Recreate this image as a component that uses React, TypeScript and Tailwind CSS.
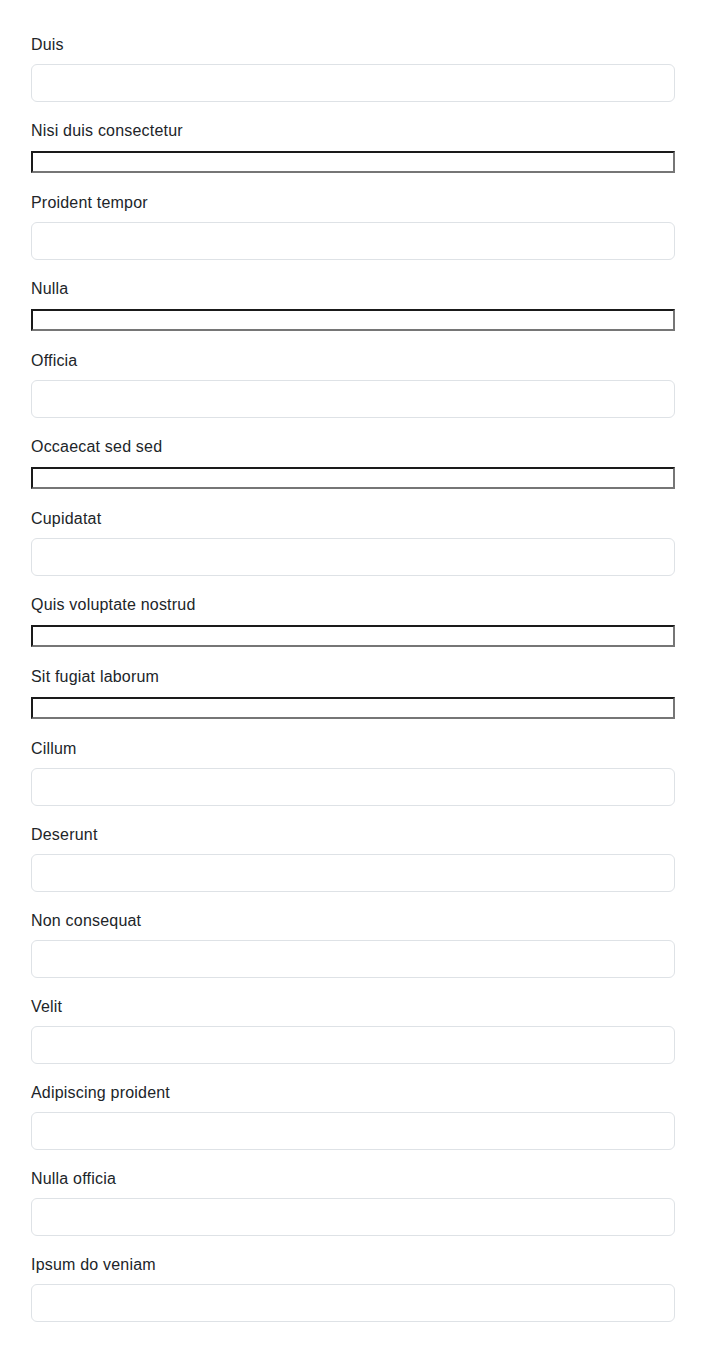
import React from "react";

const fields: { label: string; plain?: boolean }[] = [
  { label: "Duis" },
  { label: "Nisi duis consectetur", plain: true },
  { label: "Proident tempor" },
  { label: "Nulla", plain: true },
  { label: "Officia" },
  { label: "Occaecat sed sed", plain: true },
  { label: "Cupidatat" },
  { label: "Quis voluptate nostrud", plain: true },
  { label: "Sit fugiat laborum", plain: true },
  { label: "Cillum" },
  { label: "Deserunt" },
  { label: "Non consequat" },
  { label: "Velit" },
  { label: "Adipiscing proident" },
  { label: "Nulla officia" },
  { label: "Ipsum do veniam" },
];

export default function App() {
  return (
    <div
      className="bg-white text-[#212529] px-[31px] pt-8 pb-8 min-h-[1370px]"
      style={{ fontFamily: '"Liberation Sans", Arial, sans-serif' }}
    >
      {fields.map((f, i) => (
        <div key={i} className="mb-4">
          <label className="block text-base leading-6 pt-px mb-[7px] tracking-[0.2px]">
            {f.label}
          </label>
          {f.plain ? (
            <div className="h-6 flex items-center">
              <input
                type="text"
                className="block w-full h-[22px] bg-white border-2 border-t-[#1a1a1a] border-l-[#1a1a1a] border-b-[#767676] border-r-[#767676] outline-none"
              />
            </div>
          ) : (
            <input
              type="text"
              className="block w-full h-[38px] bg-white border border-[#dee2e6] rounded-[6px] px-3 text-base outline-none"
            />
          )}
        </div>
      ))}
    </div>
  );
}
